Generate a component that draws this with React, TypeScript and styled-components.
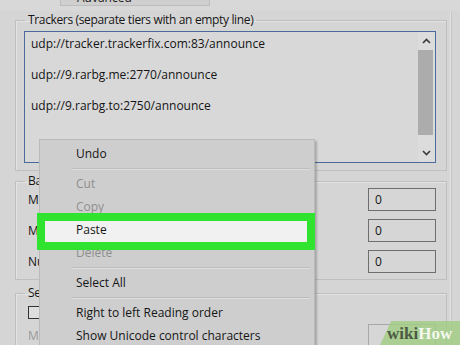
import React from 'react';
import styled, { createGlobalStyle } from 'styled-components';

const GlobalStyle = createGlobalStyle`
    body {
        margin: 0;
        background: #d5d5d5;
        font-family: "Open Sans", "Noto Sans", sans-serif;
    }
`;

const trackers = [
    'udp://tracker.trackerfix.com:83/announce',
    '',
    'udp://9.rarbg.me:2770/announce',
    '',
    'udp://9.rarbg.to:2750/announce',
];

const menuItems: ({ label: string; disabled?: boolean; highlighted?: boolean } | null)[] = [
    { label: 'Undo' },
    null,
    { label: 'Cut', disabled: true },
    { label: 'Copy', disabled: true },
    { label: 'Paste', highlighted: true },
    { label: 'Delete', disabled: true },
    null,
    { label: 'Select All' },
    null,
    { label: 'Right to left Reading order' },
    { label: 'Show Unicode control characters' },
    { label: 'Insert Unicode control character' },
];

const Chevron = ({ down }: { down?: boolean }) => (
    <svg width="9" height="6" viewBox="0 0 9 6">
        <path
            d={down ? 'M1 1 L4.5 4.5 L8 1' : 'M1 5 L4.5 1.5 L8 5'}
            fill="none"
            stroke="#3a3a3a"
            strokeWidth="1.6"
        />
    </svg>
);

const App = () => {
    return (
        <Window>
            <GlobalStyle />
            <TabStrip>
                <Tab>Advanced</Tab>
            </TabStrip>
            <Panel>
                <GroupBox>
                    <Legend>Trackers (separate tiers with an empty line)</Legend>
                    <TextArea>
                        <TextLines>
                            {trackers.map((t, i) => (
                                <Line key={i}>{t}</Line>
                            ))}
                        </TextLines>
                        <ScrollBar>
                            <ArrowButton><Chevron /></ArrowButton>
                            <Thumb />
                            <Track />
                            <ArrowButton><Chevron down /></ArrowButton>
                        </ScrollBar>
                    </TextArea>
                </GroupBox>

                <GroupBox gap={2}>
                    <Legend>Bandwidth Allocation</Legend>
                    <Rows>
                        <Row>
                            <Label>Maximum upload rate (kB/s): [0: unlimited]</Label>
                            <NumberBox>0</NumberBox>
                        </Row>
                        <Row>
                            <Label>Maximum download rate (kB/s): [0: unlimited]</Label>
                            <NumberBox>0</NumberBox>
                        </Row>
                        <Row>
                            <Label>Number of connections: [0: default]</Label>
                            <NumberBox>0</NumberBox>
                        </Row>
                    </Rows>
                </GroupBox>

                <GroupBox gap={5}>
                    <Legend>Seeding Goals</Legend>
                    <CheckRow>
                        <CheckBox />
                        <Label>Override default settings</Label>
                    </CheckRow>
                    <Row>
                        <Label disabled>Minimum ratio (%)</Label>
                        <NumberBox disabled />
                    </Row>
                </GroupBox>
            </Panel>

            <Menu>
                {menuItems.map((item, i) =>
                    item ? (
                        <MenuItem key={i} disabled={item.disabled} highlighted={item.highlighted}>
                            <span>{item.label}</span>
                        </MenuItem>
                    ) : (
                        <Separator key={i} />
                    )
                )}
            </Menu>

            <Watermark>
                <Wiki>wiki</Wiki>How
            </Watermark>
        </Window>
    );
};

export default App;

// Styled Components
const Window = styled.div`
    position: relative;
    width: 460px;
    height: 345px;
    overflow: hidden;
    background: #d5d5d5;
    font-size: 12px;
    color: #151515;
`;

const TabStrip = styled.div`
    height: 13px;
    padding-left: 60px;
    background: #d8d8d8;
`;

const Tab = styled.div`
    width: 150px;
    height: 8px;
    overflow: hidden;
    box-sizing: border-box;
    padding-left: 16px;
    line-height: 0px;
    margin-top: -2px;
    background: #cfcfcf;
    border: 1px solid #bdbdbd;
    border-top: none;
    color: #222;
`;

const Panel = styled.div`
    margin-left: 15px;
    width: 437px;
    height: 332px;
    box-sizing: border-box;
    padding-right: 4px;
    border-right: 1px solid #c4c4c4;
    box-shadow: inset -1px 0 0 #e2e2e2;
`;

const GroupBox = styled.fieldset<{ gap?: number }>`
    margin: ${({ gap }) => gap ?? 1}px 0 0 0;
    padding: 0 0 6px 0;
    min-width: 0;
    border: 1px solid #bfbfbf;
    box-shadow: inset 1px 1px 0 #e3e3e3;
`;

const Legend = styled.legend`
    margin-left: 9px;
    padding: 0 3px;
    line-height: 16px;
    font-size: 12px;
    letter-spacing: -0.35px;
    color: #151515;
`;

const TextArea = styled.div`
    display: flex;
    height: 132px;
    box-sizing: border-box;
    margin: 3px 10px 1px 8px;
    border: 1px solid #4a6b9c;
    background: #d8d8d8;
`;

const TextLines = styled.div`
    flex: 1;
    padding: 4px 6px;
`;

const Line = styled.div`
    height: 15.5px;
    line-height: 15.5px;
    white-space: nowrap;
`;

const ScrollBar = styled.div`
    width: 17px;
    display: flex;
    flex-direction: column;
    background: #dcdcdc;
`;

const ArrowButton = styled.div`
    height: 18px;
    display: flex;
    align-items: center;
    justify-content: center;
`;

const Thumb = styled.div`
    height: 85px;
    margin: 0 2px 0 0;
    background: #acacac;
`;

const Track = styled.div`
    flex: 1;
`;

const Rows = styled.div`
    display: flex;
    flex-direction: column;
    gap: 8px;
    margin-top: -1px;
`;

const Row = styled.div`
    display: flex;
    align-items: center;
    justify-content: space-between;
    height: 23px;
    padding: 0 10px 0 12px;
`;

const Label = styled.span<{ disabled?: boolean }>`
    white-space: nowrap;
    color: ${({ disabled }) => (disabled ? '#9a9a9a' : '#151515')};
`;

const NumberBox = styled.div<{ disabled?: boolean }>`
    width: 68px;
    height: 23px;
    box-sizing: border-box;
    padding-left: 6px;
    line-height: 21px;
    border: 1px solid ${({ disabled }) => (disabled ? '#a8a8a8' : '#6e6e6e')};
    background: #d6d6d6;
`;

const CheckRow = styled.div`
    display: flex;
    align-items: center;
    gap: 6px;
    height: 13px;
    margin: 5px 0 5px 12px;
`;

const CheckBox = styled.div`
    width: 13px;
    height: 13px;
    box-sizing: border-box;
    border: 1px solid #333;
    background: #dedede;
`;

const Menu = styled.div`
    position: absolute;
    left: 39px;
    top: 139px;
    width: 276px;
    box-sizing: border-box;
    padding: 2px;
    background: #cecece;
    border: 1px solid #bababa;
    box-shadow: 2px 2px 2px rgba(0, 0, 0, 0.22);
`;

const MenuItem = styled.div<{ disabled?: boolean; highlighted?: boolean }>`
    position: relative;
    z-index: ${({ highlighted }) => (highlighted ? 1 : 0)};
    height: 23px;
    line-height: 23px;
    padding-left: 34px;
    white-space: nowrap;
    color: ${({ disabled }) => (disabled ? '#8e8e8e' : '#151515')};

    &::before {
        content: '';
        display: ${({ highlighted }) => (highlighted ? 'block' : 'none')};
        position: absolute;
        top: -5px;
        bottom: -9px;
        left: -5px;
        right: -3px;
        border: 8px solid #2fe32f;
        background: #f1f1f1;
    }

    span {
        position: relative;
    }
`;

const Separator = styled.div`
    height: 7px;
    margin: 0 2px 0 30px;
    display: flex;
    align-items: center;

    &::after {
        content: '';
        flex: 1;
        height: 1px;
        background: #bcbcbc;
        box-shadow: 0 1px 0 #dedede;
    }
`;

const Watermark = styled.div`
    position: absolute;
    right: 0;
    bottom: 0;
    width: 80px;
    height: 24px;
    padding-left: 7px;
    box-sizing: border-box;
    clip-path: polygon(14% 0, 100% 0, 100% 100%, 0 100%);
    background: rgba(160, 205, 130, 0.8);
    font-family: "Liberation Serif", serif;
    font-weight: bold;
    font-size: 17px;
    line-height: 26px;
    color: #f4f8ee;
`;

const Wiki = styled.span`
    color: #4c5a44;
`;
